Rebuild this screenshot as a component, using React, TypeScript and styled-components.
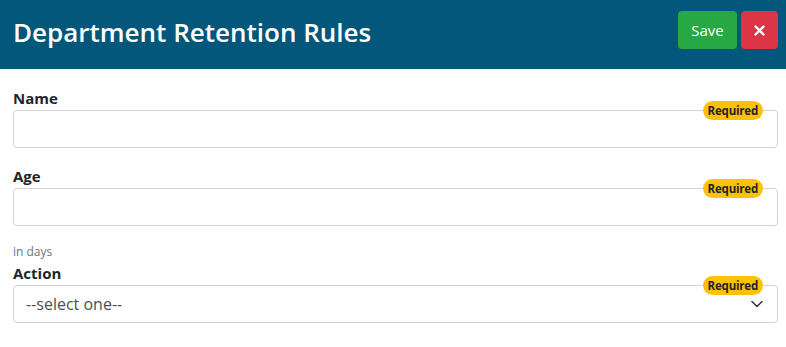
import React from 'react';
import styled, { createGlobalStyle } from 'styled-components';

const GlobalStyle = createGlobalStyle`
  body {
    margin: 0;
    background: #fff;
    font-family: "Open Sans", "Noto Sans", sans-serif;
    color: #212529;
  }
`;

const Header = styled.header`
  height: 69px;
  background: #03577b;
  display: flex;
  align-items: center;
  justify-content: space-between;
  padding: 0 8px 0 13px;
  box-sizing: border-box;
`;

const Title = styled.h1`
  margin: 0;
  color: #fff;
  font-size: 26px;
  font-weight: 600;
  padding-bottom: 6px;
`;

const Actions = styled.div`
  display: flex;
  gap: 4px;
  align-self: flex-start;
  margin-top: 11px;
`;

const Button = styled.button<{ $variant: 'success' | 'danger' }>`
  height: 38px;
  border: none;
  border-radius: 4px;
  color: #fff;
  font-family: inherit;
  font-size: 15px;
  cursor: pointer;
  background: ${(p) => (p.$variant === 'success' ? '#28a745' : '#dc3545')};
  padding: ${(p) => (p.$variant === 'success' ? '0 12px' : '0')};
  width: ${(p) => (p.$variant === 'success' ? '59px' : '37px')};
  display: flex;
  align-items: center;
  justify-content: center;
`;

const Form = styled.form`
  padding: 17px 8px 0 13px;
`;

const Group = styled.div<{ $mb?: number }>`
  margin-bottom: ${(p) => p.$mb ?? 16}px;
`;

const Label = styled.label`
  display: block;
  font-weight: 700;
  font-size: 15px;
  line-height: 24px;
  margin-bottom: 0;
`;

const FieldWrap = styled.div`
  position: relative;
`;

const Input = styled.input`
  display: block;
  width: 100%;
  height: 38px;
  box-sizing: border-box;
  border: 1px solid #ced4da;
  border-radius: 4px;
  padding: 6px 12px;
  font-family: inherit;
  font-size: 16px;
`;

const Select = styled.div`
  height: 38px;
  box-sizing: border-box;
  border: 1px solid #ced4da;
  border-radius: 4px;
  padding: 0 14px 0 12px;
  display: flex;
  align-items: center;
  justify-content: space-between;
  font-size: 16px;
  color: #495057;
`;

const Badge = styled.span`
  position: absolute;
  top: -9px;
  right: 15px;
  background: #ffc107;
  color: #212529;
  font-size: 11.5px;
  font-weight: 700;
  line-height: 19px;
  padding: 0 5px;
  border-radius: 10px;
  letter-spacing: -0.2px;
`;

const Hint = styled.small`
  display: block;
  font-size: 12px;
  color: #6c757d;
  margin-top: 17px;
  line-height: 18px;
`;

const Chevron = () => (
  <svg width="12" height="8" viewBox="0 0 12 8" fill="none">
    <path d="M1 1.5l5 5 5-5" stroke="#343a40" strokeWidth="1.6" strokeLinecap="round" strokeLinejoin="round" />
  </svg>
);

const App: React.FC = () => {
  return (
    <>
      <GlobalStyle />
      <Header>
        <Title>Department Retention Rules</Title>
        <Actions>
          <Button $variant="success" type="button">Save</Button>
          <Button $variant="danger" type="button" aria-label="Close">
            <svg width="11" height="11" viewBox="0 0 11 11">
              <path d="M1.5 1.5l8 8M9.5 1.5l-8 8" stroke="#fff" strokeWidth="2.4" strokeLinecap="round" />
            </svg>
          </Button>
        </Actions>
      </Header>
      <Form>
        <Group>
          <Label>Name</Label>
          <FieldWrap>
            <Input />
            <Badge>Required</Badge>
          </FieldWrap>
        </Group>
        <Group $mb={0}>
          <Label>Age</Label>
          <FieldWrap>
            <Input />
            <Badge>Required</Badge>
          </FieldWrap>
          <Hint>in days</Hint>
        </Group>
        <Group>
          <Label>Action</Label>
          <FieldWrap>
            <Select>
              <span>--select one--</span>
              <Chevron />
            </Select>
            <Badge>Required</Badge>
          </FieldWrap>
        </Group>
      </Form>
    </>
  );
};

export default App;
